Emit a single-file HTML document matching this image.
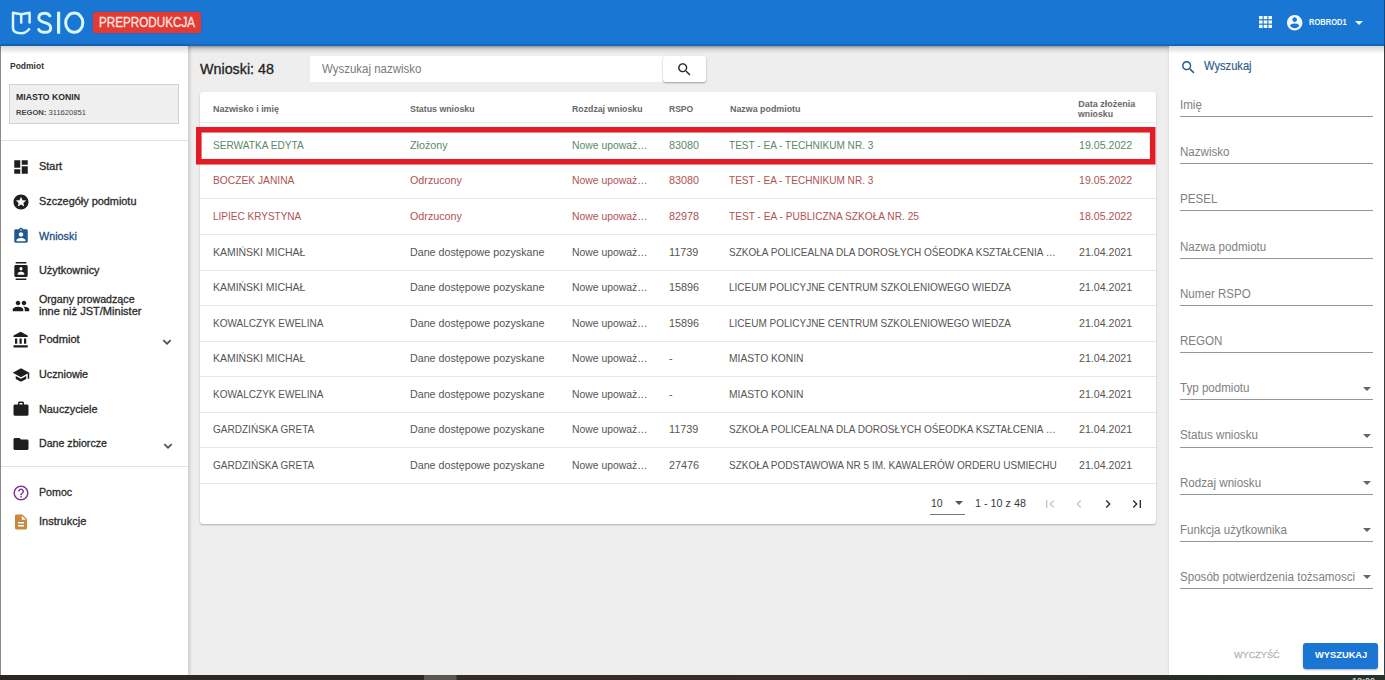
<!DOCTYPE html>
<html><head><meta charset="utf-8">
<style>
*{box-sizing:border-box;margin:0;padding:0}
html,body{width:1385px;height:680px;overflow:hidden;background:#eeeeee;font-family:"Liberation Sans",sans-serif}
body{position:relative}
.t{position:absolute;white-space:nowrap;transform-origin:0 50%;line-height:1}
.a{position:absolute}
svg{position:absolute;overflow:visible}
#hdr{position:absolute;left:0;top:0;width:1385px;height:45.5px;background:#1976d3;box-shadow:0 1px 3px rgba(0,0,0,.35)}
#side{position:absolute;left:0;top:45.5px;width:188px;height:629px;background:#fff;border-left:1px solid #8a8a8a;box-shadow:1px 0 4px rgba(0,0,0,.22)}
#panel{position:absolute;left:1169px;top:45.5px;width:216px;height:629px;background:#fff;border-right:1px solid #5a5a5a;box-shadow:-1px 0 2px rgba(0,0,0,.06)}
#task{position:absolute;left:0;top:674.5px;width:1385px;height:6px;background:linear-gradient(90deg,#2a2826 0,#2c2826 424px,#5c5552 424px,#5c5552 456px,#332a28 457px,#3a2c2a 900px,#2a2a26 1150px,#26302a 1250px,#27322a 1385px)}
#card{position:absolute;left:200px;top:92px;width:956px;height:432px;background:#fff;border-radius:3px;box-shadow:0 1px 2px rgba(0,0,0,.28)}
#search{position:absolute;left:310px;top:56px;width:352.5px;height:26px;background:#fff}
#sbtn{position:absolute;left:663px;top:56px;width:43px;height:26px;background:#fff;border-radius:3px;box-shadow:0 1px 2px rgba(0,0,0,.35)}
.line{position:absolute;height:1px;background:#e8e8e8}
.ul{position:absolute;left:1180px;width:192.5px;height:1px;background:#959595}
#redbox{position:absolute;left:196px;top:127px;width:959px;height:37.5px;border:5.3px solid #e41b25;box-shadow:0 0 1px rgba(150,0,0,.6)}
#hshadow{position:absolute;left:0;top:45.5px;width:1385px;height:8px;background:linear-gradient(rgba(0,0,0,.16),rgba(0,0,0,0))}
</style></head><body>
<div id="hdr"></div>
<div id="side"></div>
<div id="card"></div>
<div id="panel"></div>
<div id="hshadow"></div>
<div id="task"></div>
<div class="a" style="left:1384px;top:0;width:1px;height:674px;background:rgba(0,0,0,.35)"></div>
<div class="a" style="left:0;top:43.5px;width:1385px;height:2px;background:rgba(0,0,0,.12)"></div>
<!-- header logo -->
<svg width="100" height="45" style="left:0;top:0" viewBox="0 0 100 45">
 <g fill="none" stroke="#d8f7ff" stroke-width="2.5" stroke-linejoin="round">
  <path d="M13 28 Q13 33.2 21.2 33.2 Q26.5 33.2 29.6 28.3"/>
  <path d="M13 28.5 V12.8 L21.2 14.2 L29.6 12.8 V23.6"/>
  <path d="M21.2 14.2 V23.6"/>
  <path stroke-width="2.9" stroke-linejoin="miter" d="M50.3 17.0 C49.5 14.4 47.5 13.2 44.6 13.2 C41.0 13.2 38.8 15.0 38.8 17.8 C38.8 20.8 41.5 21.9 44.8 22.7 C48.6 23.6 50.7 25.0 50.7 28.0 C50.7 31.0 48.2 32.3 44.8 32.3 C41.5 32.3 39.0 31.0 38.3 28.3"/>
  <ellipse cx="74.25" cy="22.7" rx="8.6" ry="9.6" stroke-width="3"/>
 </g>
 <rect x="57" y="11.7" width="3.2" height="22" fill="#d8f7ff"/>
</svg>
<div class="a" style="left:93.2px;top:11.5px;width:107.5px;height:21.7px;background:#e33a33;border-radius:2px;box-shadow:0 0 1px #b02"></div>
<!-- header right icons -->
<svg width="13" height="12" style="left:1259.4px;top:16.4px" viewBox="0 0 13 12"><g fill="#f2fbff">
 <rect x="0" y="0" width="3.6" height="3.2"/><rect x="4.7" y="0" width="3.6" height="3.2"/><rect x="9.4" y="0" width="3.6" height="3.2"/>
 <rect x="0" y="4.4" width="3.6" height="3.2"/><rect x="4.7" y="4.4" width="3.6" height="3.2"/><rect x="9.4" y="4.4" width="3.6" height="3.2"/>
 <rect x="0" y="8.8" width="3.6" height="3.2"/><rect x="4.7" y="8.8" width="3.6" height="3.2"/><rect x="9.4" y="8.8" width="3.6" height="3.2"/></g></svg>
<svg width="15.4" height="15.4" style="left:1286.6px;top:14.8px" viewBox="2 2 20 20"><path fill="#f4fbff" d="M12 2C6.48 2 2 6.48 2 12s4.48 10 10 10 10-4.48 10-10S17.52 2 12 2zm0 3c1.66 0 3 1.34 3 3s-1.34 3-3 3-3-1.34-3-3 1.34-3 3-3zm0 14.2c-2.5 0-4.71-1.28-6-3.22.03-1.990 4-3.08 6-3.08 1.99 0 5.97 1.09 6 3.08-1.29 1.94-3.5 3.22-6 3.22z"/></svg>
<svg width="8" height="4" style="left:1355.3px;top:20.7px" viewBox="0 0 8 4"><path fill="#f4fbff" d="M0 0H8L4 4z"/></svg>

<!-- sidebar -->
<div class="a" style="left:9.2px;top:83.5px;width:169.5px;height:40px;background:#efefef;border:1px solid #cfcfcf"></div>
<div class="line" style="left:1px;top:140px;width:187px;background:#e2e2e2"></div>
<div class="line" style="left:1px;top:466px;width:187px;background:#e2e2e2"></div>
<svg width="18" height="18" style="left:11.9px;top:158.3px" viewBox="0 0 24 24"><path fill="#1e1e1e" d="M3 13h8V3H3v10zm0 8h8v-6H3v6zm10 0h8V11h-8v10zm0-18v6h8V3h-8z"/></svg>
<svg width="18" height="18" style="left:12px;top:192.5px" viewBox="0 0 24 24"><path fill="#1e1e1e" d="M11.99 2C6.47 2 2 6.48 2 12s4.47 10 9.99 10C17.52 22 22 17.52 22 12S17.52 2 11.99 2zm4.24 16L12 15.45 7.77 18l1.12-4.81-3.73-3.23 4.92-.42L12 5l1.92 4.53 4.92.42-3.73 3.23L16.23 18z"/></svg>
<svg width="18" height="18" style="left:12px;top:227.2px" viewBox="0 0 24 24"><path fill="#1f5a8f" d="M19 3h-4.18C14.4 1.84 13.3 1 12 1c-1.3 0-2.4.84-2.82 2H5c-1.1 0-2 .9-2 2v14c0 1.1.9 2 2 2h14c1.1 0 2-.9 2-2V5c0-1.1-.9-2-2-2zm-7 0c.55 0 1 .45 1 1s-.45 1-1 1-1-.45-1-1 .45-1 1-1zm0 4c1.66 0 3 1.34 3 3s-1.340 3-3 3-3-1.34-3-3 1.34-3 3-3zm6 12H6v-1.4c0-2 4-3.1 6-3.1s6 1.1 6 3.1V19z"/></svg>
<svg width="16" height="18" style="left:13px;top:262px" viewBox="0 0 24 24" preserveAspectRatio="none"><path fill="#1e1e1e" d="M20 0H4v2h16V0zM4 24h16v-2H4v2zM20 4H4c-1.1 0-2 .9-2 2v12c0 1.1.9 2 2 2h16c1.1 0 2-.9 2-2V6c0-1.1-.9-2-2-2zm-8 2.75c1.24 0 2.25 1.01 2.25 2.25s-1.01 2.25-2.25 2.25S9.75 10.24 9.75 9 10.76 6.75 12 6.750zM17 17H7v-1.5c0-1.67 3.33-2.5 5-2.5s5 .83 5 2.5V17z"/></svg>
<svg width="18" height="18" style="left:12px;top:296.5px" viewBox="0 0 24 24"><path fill="#1e1e1e" d="M16 11c1.66 0 2.99-1.34 2.99-3S17.66 5 16 5c-1.66 0-3 1.34-3 3s1.34 3 3 3zm-8 0c1.66 0 2.99-1.34 2.99-3S9.66 5 8 5C6.34 5 5 6.34 5 8s1.34 3 3 3zm0 2c-2.33 0-7 1.17-7 3.5V19h14v-2.5c0-2.33-4.670-3.5-7-3.5zm8 0c-.29 0-.62.02-.97.05 1.16.84 1.97 1.97 1.97 3.45V19h6v-2.5c0-2.33-4.67-3.5-7-3.5z"/></svg>
<svg width="18" height="18" style="left:11.6px;top:331px" viewBox="0 0 24 24"><path fill="#1e1e1e" d="M4 10v7h3v-7H4zm6 0v7h3v-7h-3zM2 22h19v-3H2v3zm14-12v7h3v-7h-3zm-4.5-9L2 6v2h19V6l-9.5-5z"/></svg>
<svg width="18" height="18" style="left:12.3px;top:365.5px" viewBox="0 0 24 24"><path fill="#1e1e1e" d="M5 13.18v4L12 21l7-3.82v-4L12 17l-7-3.82zM12 3L1 9l11 6 9-4.91V17h2V9L12 3z"/></svg>
<svg width="18" height="18" style="left:12px;top:400px" viewBox="0 0 24 24"><path fill="#1e1e1e" d="M20 6h-4V4c0-1.11-.89-2-2-2h-4c-1.11 0-2 .89-2 2v2H4c-1.11 0-1.99.89-1.99 2L2 19c0 1.11.89 2 2 2h16c1.11 0 2-.89 2-2V8c0-1.11-.89-2-2-2zm-6 0h-4V4h4v2z"/></svg>
<svg width="18" height="18" style="left:12px;top:435px" viewBox="0 0 24 24"><path fill="#1e1e1e" d="M10 4H4c-1.1 0-1.99.9-1.99 2L2 18c0 1.1.9 2 2 2h16c1.1 0 2-.9 2-2V8c0-1.1-.9-2-2-2h-8l-2-2z"/></svg>
<svg width="16" height="16" style="left:159.3px;top:333.5px" viewBox="0 0 24 24"><path fill="#4a4a4a" stroke="#4a4a4a" stroke-width="0.7" d="M16.59 8.59L12 13.17 7.41 8.59 6 10l6 6 6-6z"/></svg>
<svg width="16" height="16" style="left:159.5px;top:437.5px" viewBox="0 0 24 24"><path fill="#4a4a4a" stroke="#4a4a4a" stroke-width="0.7" d="M16.59 8.59L12 13.17 7.41 8.59 6 10l6 6 6-6z"/></svg>
<svg width="18" height="18" style="left:12px;top:484px" viewBox="0 0 24 24"><path fill="#7b3b9a" d="M11 18h2v-2h-2v2zm1-16C6.48 2 2 6.48 2 12s4.48 10 10 10 10-4.48 10-10S17.52 2 12 2zm0 18c-4.41 0-8-3.59-8-8s3.59-8 8-8 8 3.59 8 8-3.59 8-8 8zm0-14c-2.21 0-4 1.79-4 4h2c0-1.1.9-2 2-2s2 .9 2 2c0 2-3 1.75-3 5h2c0-2.25 3-2.5 3-5 0-2.21-1.79-4-4-4z"/></svg>
<svg width="18" height="18" style="left:12px;top:513px" viewBox="0 0 24 24"><path fill="#c88a3c" d="M14 2H6c-1.1 0-1.99.9-1.99 2L4 20c0 1.1.89 2 1.99 2H18c1.1 0 2-.9 2-2V8l-6-6zm2 16H8v-2h8v2zm0-4H8v-2h8v2zm-3-5V3.5L18.5 9H13z"/></svg>

<!-- toolbar -->
<div id="search"></div>
<div id="sbtn"></div>
<svg width="17" height="17" style="left:676.1px;top:60.8px" viewBox="0 0 24 24"><path fill="#2a2a2a" d="M15.5 14h-.79l-.28-.27C15.41 12.59 16 11.11 16 9.5 16 5.91 13.09 3 9.5 3S3 5.91 3 9.5 5.91 16 9.5 16c1.61 0 3.09-.59 4.23-1.57l.27.28v.79l5 4.99L20.490 19l-4.99-5zm-6 0C7.01 14 5 11.99 5 9.5S7.01 5 9.5 5 14 7.01 14 9.5 11.99 14 9.5 14z"/></svg>

<!-- table lines -->
<div class="line" style="left:200px;top:122px;width:956px;background:#ececec"></div>
<div class="line" style="left:200px;top:198px;width:956px"></div>
<div class="line" style="left:200px;top:234px;width:956px"></div>
<div class="line" style="left:200px;top:269.5px;width:956px"></div>
<div class="line" style="left:200px;top:305px;width:956px"></div>
<div class="line" style="left:200px;top:340.5px;width:956px"></div>
<div class="line" style="left:200px;top:376px;width:956px"></div>
<div class="line" style="left:200px;top:411.5px;width:956px"></div>
<div class="line" style="left:200px;top:447px;width:956px"></div>
<div class="line" style="left:200px;top:482.5px;width:956px"></div>
<svg width="1385" height="680" style="left:0;top:0" viewBox="0 0 1385 680"><rect x="198.8" y="129.75" width="953.9" height="32" fill="none" stroke="#e21c26" stroke-width="5.6"/></svg>

<!-- pagination -->
<svg width="8" height="4" style="left:954.5px;top:501.3px" viewBox="0 0 8 4"><path fill="#555" d="M0 0H8L4 4z"/></svg>
<div class="a" style="left:930.4px;top:513.6px;width:34.6px;height:1px;background:#777"></div>
<svg width="16" height="16" style="left:1041.5px;top:495.8px" viewBox="0 0 24 24"><path fill="#c6c6c6" d="M18.41 16.59L13.82 12l4.59-4.59L17 6l-6 6 6 6zM6 6h2v12H6z"/></svg>
<svg width="16" height="16" style="left:1070.5px;top:495.8px" viewBox="0 0 24 24"><path fill="#c6c6c6" d="M15.41 7.41L14 6l-6 6 6 6 1.41-1.41L10.83 12z"/></svg>
<svg width="16" height="16" style="left:1099.5px;top:495.8px" viewBox="0 0 24 24"><path fill="#2a2a2a" d="M10 6L8.59 7.41 13.17 12l-4.58 4.590L10 18l6-6z"/></svg>
<svg width="16" height="16" style="left:1128.5px;top:495.8px" viewBox="0 0 24 24"><path fill="#2a2a2a" d="M5.59 7.41L10.18 12l-4.59 4.59L7 18l6-6-6-6zM16 6h2v12h-2z"/></svg>

<!-- right panel -->
<svg width="16.9" height="16.9" style="left:1180.3px;top:58.8px" viewBox="0 0 24 24"><path fill="#2d5b86" d="M15.5 14h-.79l-.28-.27C15.41 12.59 16 11.11 16 9.5 16 5.91 13.09 3 9.5 3S3 5.91 3 9.5 5.91 16 9.5 16c1.61 0 3.09-.59 4.23-1.57l.27.28v.79l5 4.99L20.49 19l-4.99-5zm-6 0C7.01 14 5 11.99 5 9.5S7.01 5 9.5 5 14 7.01 14 9.5 11.99 14 9.5 14z"/></svg>
<div class="ul" style="top:116px"></div>
<div class="ul" style="top:163.2px"></div>
<div class="ul" style="top:210.4px"></div>
<div class="ul" style="top:257.7px"></div>
<div class="ul" style="top:304.9px"></div>
<div class="ul" style="top:352.1px"></div>
<div class="ul" style="top:399.3px"></div>
<div class="ul" style="top:446.5px"></div>
<div class="ul" style="top:493.8px"></div>
<div class="ul" style="top:541px"></div>
<div class="ul" style="top:588.2px"></div>
<svg width="8" height="4" style="left:1362.5px;top:386.5px" viewBox="0 0 8 4"><path fill="#666" d="M0 0H8L4 4z"/></svg>
<svg width="8" height="4" style="left:1362.5px;top:433.7px" viewBox="0 0 8 4"><path fill="#666" d="M0 0H8L4 4z"/></svg>
<svg width="8" height="4" style="left:1362.5px;top:480.9px" viewBox="0 0 8 4"><path fill="#666" d="M0 0H8L4 4z"/></svg>
<svg width="8" height="4" style="left:1362.5px;top:528.1px" viewBox="0 0 8 4"><path fill="#666" d="M0 0H8L4 4z"/></svg>
<svg width="8" height="4" style="left:1362.5px;top:575.3px" viewBox="0 0 8 4"><path fill="#666" d="M0 0H8L4 4z"/></svg>
<div class="a" style="left:1303px;top:642.7px;width:75px;height:26px;background:#1a76d2;border-radius:3px;box-shadow:0 1px 2px rgba(0,0,0,.3)"></div>

<div class="t" style="left:98.90px;top:15.05px;font-size:14px;color:#fde8e4;transform:scaleX(0.835);-webkit-text-stroke:0.3px #fde8e4;">PREPRODUKCJA</div>
<div class="t" style="left:1308.90px;top:18.66px;font-size:8.2px;color:#f4fbff;font-weight:700;transform:scaleX(0.921);">ROBROD1</div>
<div class="t" style="left:10.00px;top:61.52px;font-size:8.6px;color:#333;font-weight:700;transform:scaleX(0.989);">Podmiot</div>
<div class="t" style="left:16.20px;top:93.22px;font-size:8.6px;color:#2a2a2a;font-weight:700;transform:scaleX(1.010);">MIASTO KONIN</div>
<div class="t" style="left:16.20px;top:108.65px;font-size:7.5px;color:#444;transform:scaleX(1.013);"><b>REGON:</b> 311620851</div>
<div class="t" style="left:38.60px;top:161.01px;font-size:10.5px;color:#2b2b2b;transform:scaleX(1.041);-webkit-text-stroke:0.3px #2b2b2b;">Start</div>
<div class="t" style="left:38.60px;top:196.21px;font-size:10.5px;color:#2b2b2b;transform:scaleX(1.037);-webkit-text-stroke:0.3px #2b2b2b;">Szczegóły podmiotu</div>
<div class="t" style="left:38.60px;top:230.51px;font-size:10.5px;color:#1d5182;transform:scaleX(1.028);-webkit-text-stroke:0.3px #1d5182;">Wnioski</div>
<div class="t" style="left:38.60px;top:265.21px;font-size:10.5px;color:#2b2b2b;transform:scaleX(1.038);-webkit-text-stroke:0.3px #2b2b2b;">Użytkownicy</div>
<div class="t" style="left:38.60px;top:294.31px;font-size:10.5px;color:#2b2b2b;transform:scaleX(1.017);-webkit-text-stroke:0.3px #2b2b2b;">Organy prowadzące</div>
<div class="t" style="left:38.60px;top:306.11px;font-size:10.5px;color:#2b2b2b;transform:scaleX(1.052);-webkit-text-stroke:0.3px #2b2b2b;">inne niż JST/Minister</div>
<div class="t" style="left:38.60px;top:334.01px;font-size:10.5px;color:#2b2b2b;transform:scaleX(1.056);-webkit-text-stroke:0.3px #2b2b2b;">Podmiot</div>
<div class="t" style="left:38.60px;top:368.91px;font-size:10.5px;color:#2b2b2b;transform:scaleX(1.026);-webkit-text-stroke:0.3px #2b2b2b;">Uczniowie</div>
<div class="t" style="left:38.60px;top:403.51px;font-size:10.5px;color:#2b2b2b;transform:scaleX(1.032);-webkit-text-stroke:0.3px #2b2b2b;">Nauczyciele</div>
<div class="t" style="left:38.60px;top:438.01px;font-size:10.5px;color:#2b2b2b;transform:scaleX(1.012);-webkit-text-stroke:0.3px #2b2b2b;">Dane zbiorcze</div>
<div class="t" style="left:38.60px;top:487.01px;font-size:10.5px;color:#2b2b2b;transform:scaleX(1.016);-webkit-text-stroke:0.3px #2b2b2b;">Pomoc</div>
<div class="t" style="left:38.60px;top:516.11px;font-size:10.5px;color:#2b2b2b;transform:scaleX(1.053);-webkit-text-stroke:0.3px #2b2b2b;">Instrukcje</div>
<div class="t" style="left:200.40px;top:62.03px;font-size:14.5px;color:#222;transform:scaleX(0.987);-webkit-text-stroke:0.3px #222;">Wnioski: 48</div>
<div class="t" style="left:322.00px;top:63.24px;font-size:12px;color:#7a7a7a;transform:scaleX(0.956);">Wyszukaj nazwisko</div>
<div class="t" style="left:212.80px;top:104.58px;font-size:9px;color:#686868;font-weight:700;transform:scaleX(0.992);">Nazwisko i imię</div>
<div class="t" style="left:410.40px;top:104.58px;font-size:9px;color:#686868;font-weight:700;transform:scaleX(0.979);">Status wniosku</div>
<div class="t" style="left:572.00px;top:104.58px;font-size:9px;color:#686868;font-weight:700;transform:scaleX(0.972);">Rozdzaj wniosku</div>
<div class="t" style="left:668.60px;top:104.58px;font-size:9px;color:#686868;font-weight:700;transform:scaleX(0.948);">RSPO</div>
<div class="t" style="left:729.50px;top:104.58px;font-size:9px;color:#686868;font-weight:700;transform:scaleX(0.986);">Nazwa podmiotu</div>
<div class="t" style="left:1078.30px;top:99.58px;font-size:9px;color:#686868;font-weight:700;">Data złożenia</div>
<div class="t" style="left:1078.30px;top:109.98px;font-size:9px;color:#686868;font-weight:700;transform:scaleX(0.972);">wniosku</div>
<div class="t" style="left:213.00px;top:139.87px;font-size:11px;color:#588a66;transform:scaleX(0.919);">SERWATKA EDYTA</div>
<div class="t" style="left:410.40px;top:139.87px;font-size:11px;color:#588a66;transform:scaleX(0.976);">Złożony</div>
<div class="t" style="left:572.00px;top:139.87px;font-size:11px;color:#588a66;transform:scaleX(0.944);">Nowe upoważ…</div>
<div class="t" style="left:668.60px;top:139.87px;font-size:11px;color:#588a66;transform:scaleX(0.985);">83080</div>
<div class="t" style="left:729.30px;top:139.87px;font-size:11px;color:#588a66;transform:scaleX(0.914);">TEST - EA - TECHNIKUM NR. 3</div>
<div class="t" style="left:1078.60px;top:139.87px;font-size:11px;color:#588a66;transform:scaleX(0.965);">19.05.2022</div>
<div class="t" style="left:213.00px;top:175.44px;font-size:11px;color:#b05252;transform:scaleX(0.931);">BOCZEK JANINA</div>
<div class="t" style="left:410.40px;top:175.44px;font-size:11px;color:#b05252;transform:scaleX(0.976);">Odrzucony</div>
<div class="t" style="left:572.00px;top:175.44px;font-size:11px;color:#b05252;transform:scaleX(0.944);">Nowe upoważ…</div>
<div class="t" style="left:668.60px;top:175.44px;font-size:11px;color:#b05252;transform:scaleX(0.985);">83080</div>
<div class="t" style="left:729.30px;top:175.44px;font-size:11px;color:#b05252;transform:scaleX(0.914);">TEST - EA - TECHNIKUM NR. 3</div>
<div class="t" style="left:1078.60px;top:175.44px;font-size:11px;color:#b05252;transform:scaleX(0.965);">19.05.2022</div>
<div class="t" style="left:213.00px;top:211.01px;font-size:11px;color:#b05252;transform:scaleX(0.910);">LIPIEC KRYSTYNA</div>
<div class="t" style="left:410.40px;top:211.01px;font-size:11px;color:#b05252;transform:scaleX(0.976);">Odrzucony</div>
<div class="t" style="left:572.00px;top:211.01px;font-size:11px;color:#b05252;transform:scaleX(0.944);">Nowe upoważ…</div>
<div class="t" style="left:668.60px;top:211.01px;font-size:11px;color:#b05252;transform:scaleX(0.985);">82978</div>
<div class="t" style="left:729.30px;top:211.01px;font-size:11px;color:#b05252;transform:scaleX(0.923);">TEST - EA - PUBLICZNA SZKOŁA NR. 25</div>
<div class="t" style="left:1078.60px;top:211.01px;font-size:11px;color:#b05252;transform:scaleX(0.965);">18.05.2022</div>
<div class="t" style="left:213.00px;top:246.58px;font-size:11px;color:#555555;transform:scaleX(0.950);">KAMIŃSKI MICHAŁ</div>
<div class="t" style="left:410.40px;top:246.58px;font-size:11px;color:#555555;transform:scaleX(0.972);">Dane dostępowe pozyskane</div>
<div class="t" style="left:572.00px;top:246.58px;font-size:11px;color:#555555;transform:scaleX(0.944);">Nowe upoważ…</div>
<div class="t" style="left:668.60px;top:246.58px;font-size:11px;color:#555555;transform:scaleX(0.985);">11739</div>
<div class="t" style="left:729.30px;top:246.58px;font-size:11px;color:#555555;transform:scaleX(0.911);">SZKOŁA POLICEALNA DLA DOROSŁYCH OŚEODKA KSZTAŁCENIA …</div>
<div class="t" style="left:1078.60px;top:246.58px;font-size:11px;color:#555555;transform:scaleX(0.965);">21.04.2021</div>
<div class="t" style="left:213.00px;top:282.15px;font-size:11px;color:#555555;transform:scaleX(0.950);">KAMIŃSKI MICHAŁ</div>
<div class="t" style="left:410.40px;top:282.15px;font-size:11px;color:#555555;transform:scaleX(0.972);">Dane dostępowe pozyskane</div>
<div class="t" style="left:572.00px;top:282.15px;font-size:11px;color:#555555;transform:scaleX(0.944);">Nowe upoważ…</div>
<div class="t" style="left:668.60px;top:282.15px;font-size:11px;color:#555555;transform:scaleX(0.985);">15896</div>
<div class="t" style="left:729.30px;top:282.15px;font-size:11px;color:#555555;transform:scaleX(0.908);">LICEUM POLICYJNE CENTRUM SZKOLENIOWEGO WIEDZA</div>
<div class="t" style="left:1078.60px;top:282.15px;font-size:11px;color:#555555;transform:scaleX(0.965);">21.04.2021</div>
<div class="t" style="left:213.00px;top:317.72px;font-size:11px;color:#555555;transform:scaleX(0.910);">KOWALCZYK EWELINA</div>
<div class="t" style="left:410.40px;top:317.72px;font-size:11px;color:#555555;transform:scaleX(0.972);">Dane dostępowe pozyskane</div>
<div class="t" style="left:572.00px;top:317.72px;font-size:11px;color:#555555;transform:scaleX(0.944);">Nowe upoważ…</div>
<div class="t" style="left:668.60px;top:317.72px;font-size:11px;color:#555555;transform:scaleX(0.985);">15896</div>
<div class="t" style="left:729.30px;top:317.72px;font-size:11px;color:#555555;transform:scaleX(0.908);">LICEUM POLICYJNE CENTRUM SZKOLENIOWEGO WIEDZA</div>
<div class="t" style="left:1078.60px;top:317.72px;font-size:11px;color:#555555;transform:scaleX(0.965);">21.04.2021</div>
<div class="t" style="left:213.00px;top:353.29px;font-size:11px;color:#555555;transform:scaleX(0.950);">KAMIŃSKI MICHAŁ</div>
<div class="t" style="left:410.40px;top:353.29px;font-size:11px;color:#555555;transform:scaleX(0.972);">Dane dostępowe pozyskane</div>
<div class="t" style="left:572.00px;top:353.29px;font-size:11px;color:#555555;transform:scaleX(0.944);">Nowe upoważ…</div>
<div class="t" style="left:668.60px;top:353.29px;font-size:11px;color:#555555;transform:scaleX(0.985);">-</div>
<div class="t" style="left:729.30px;top:353.29px;font-size:11px;color:#555555;transform:scaleX(0.933);">MIASTO KONIN</div>
<div class="t" style="left:1078.60px;top:353.29px;font-size:11px;color:#555555;transform:scaleX(0.965);">21.04.2021</div>
<div class="t" style="left:213.00px;top:388.86px;font-size:11px;color:#555555;transform:scaleX(0.910);">KOWALCZYK EWELINA</div>
<div class="t" style="left:410.40px;top:388.86px;font-size:11px;color:#555555;transform:scaleX(0.972);">Dane dostępowe pozyskane</div>
<div class="t" style="left:572.00px;top:388.86px;font-size:11px;color:#555555;transform:scaleX(0.944);">Nowe upoważ…</div>
<div class="t" style="left:668.60px;top:388.86px;font-size:11px;color:#555555;transform:scaleX(0.985);">-</div>
<div class="t" style="left:729.30px;top:388.86px;font-size:11px;color:#555555;transform:scaleX(0.933);">MIASTO KONIN</div>
<div class="t" style="left:1078.60px;top:388.86px;font-size:11px;color:#555555;transform:scaleX(0.965);">21.04.2021</div>
<div class="t" style="left:213.00px;top:424.43px;font-size:11px;color:#555555;transform:scaleX(0.912);">GARDZIŃSKA GRETA</div>
<div class="t" style="left:410.40px;top:424.43px;font-size:11px;color:#555555;transform:scaleX(0.972);">Dane dostępowe pozyskane</div>
<div class="t" style="left:572.00px;top:424.43px;font-size:11px;color:#555555;transform:scaleX(0.944);">Nowe upoważ…</div>
<div class="t" style="left:668.60px;top:424.43px;font-size:11px;color:#555555;transform:scaleX(0.985);">11739</div>
<div class="t" style="left:729.30px;top:424.43px;font-size:11px;color:#555555;transform:scaleX(0.911);">SZKOŁA POLICEALNA DLA DOROSŁYCH OŚEODKA KSZTAŁCENIA …</div>
<div class="t" style="left:1078.60px;top:424.43px;font-size:11px;color:#555555;transform:scaleX(0.965);">21.04.2021</div>
<div class="t" style="left:213.00px;top:460.00px;font-size:11px;color:#555555;transform:scaleX(0.912);">GARDZIŃSKA GRETA</div>
<div class="t" style="left:410.40px;top:460.00px;font-size:11px;color:#555555;transform:scaleX(0.972);">Dane dostępowe pozyskane</div>
<div class="t" style="left:572.00px;top:460.00px;font-size:11px;color:#555555;transform:scaleX(0.944);">Nowe upoważ…</div>
<div class="t" style="left:668.60px;top:460.00px;font-size:11px;color:#555555;transform:scaleX(0.985);">27476</div>
<div class="t" style="left:729.30px;top:460.00px;font-size:11px;color:#555555;transform:scaleX(0.912);">SZKOŁA PODSTAWOWA NR 5 IM. KAWALERÓW ORDERU USMIECHU</div>
<div class="t" style="left:1078.60px;top:460.00px;font-size:11px;color:#555555;transform:scaleX(0.965);">21.04.2021</div>
<div class="t" style="left:931.30px;top:498.27px;font-size:11.5px;color:#3a3a3a;transform:scaleX(0.906);">10</div>
<div class="t" style="left:975.10px;top:498.27px;font-size:11.5px;color:#3a3a3a;transform:scaleX(0.938);">1 - 10 z 48</div>
<div class="t" style="left:1203.90px;top:60.14px;font-size:12px;color:#2d5b86;transform:scaleX(0.929);-webkit-text-stroke:0.15px #2d5b86;">Wyszukaj</div>
<div class="t" style="left:1180.30px;top:98.84px;font-size:12px;color:#808080;transform:scaleX(0.965);">Imię</div>
<div class="t" style="left:1180.30px;top:146.06px;font-size:12px;color:#808080;transform:scaleX(0.965);">Nazwisko</div>
<div class="t" style="left:1180.30px;top:193.28px;font-size:12px;color:#808080;transform:scaleX(0.965);">PESEL</div>
<div class="t" style="left:1180.30px;top:240.50px;font-size:12px;color:#808080;transform:scaleX(0.965);">Nazwa podmiotu</div>
<div class="t" style="left:1180.30px;top:287.72px;font-size:12px;color:#808080;transform:scaleX(0.965);">Numer RSPO</div>
<div class="t" style="left:1180.30px;top:334.94px;font-size:12px;color:#808080;transform:scaleX(0.965);">REGON</div>
<div class="t" style="left:1180.30px;top:382.16px;font-size:12px;color:#808080;transform:scaleX(0.965);">Typ podmiotu</div>
<div class="t" style="left:1180.30px;top:429.38px;font-size:12px;color:#808080;transform:scaleX(0.965);">Status wniosku</div>
<div class="t" style="left:1180.30px;top:476.60px;font-size:12px;color:#808080;transform:scaleX(0.965);">Rodzaj wniosku</div>
<div class="t" style="left:1180.30px;top:523.82px;font-size:12px;color:#808080;transform:scaleX(0.965);">Funkcja użytkownika</div>
<div class="t" style="left:1180.30px;top:571.04px;font-size:12px;color:#808080;transform:scaleX(0.965);">Sposób potwierdzenia tożsamosci</div>
<div class="t" style="left:1234.20px;top:649.87px;font-size:9.6px;color:#b8b8b8;transform:scaleX(0.951);-webkit-text-stroke:0.3px #b8b8b8;">WYCZYŚĆ</div>
<div class="t" style="left:1314.50px;top:649.87px;font-size:9.6px;color:#ffffff;font-weight:700;transform:scaleX(0.971);">WYSZUKAJ</div>
<div class="t" style="left:1352.00px;top:677.18px;font-size:9px;color:#c5cdc5;font-weight:700;">12:00</div>
</body></html>
